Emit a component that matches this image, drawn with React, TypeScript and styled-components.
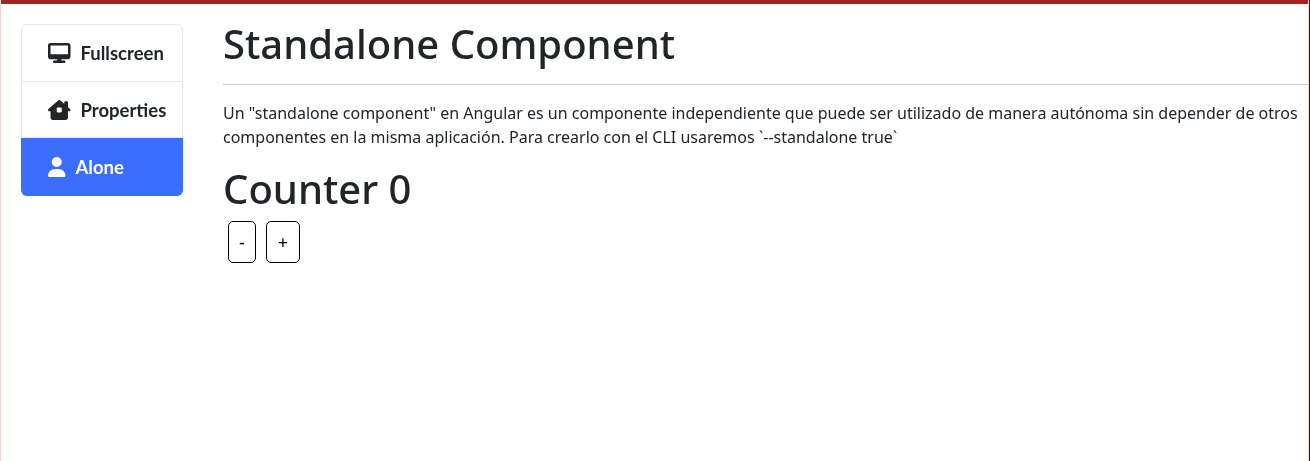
import React from "react";
import styled, { createGlobalStyle } from "styled-components";
import { FaDesktop, FaHouseChimneyWindow, FaUser } from "react-icons/fa6";

const Global = createGlobalStyle`
  html, body { margin: 0; padding: 0; background: #fff; }
  body { font-family: "Noto Sans", sans-serif; color: #212529; }
  * { box-sizing: border-box; }
`;

const Window = styled.div`
  width: 1310px;
  height: 461px;
  overflow: hidden;
  display: flex;
  will-change: transform;
`;

const Frame = styled.div`
  flex: 1;
  min-width: 0;
  display: flex;
  flex-direction: column;
  border-left: 1px solid #f5d5d2;
  border-right: 1px solid #f5d5d2;
`;

const EdgeStrip = styled.div`
  width: 1px;
  flex: none;
  background: #2a2020;
`;

const TopBar = styled.div`
  height: 4px;
  flex: none;
  background: #a52222;
`;

const Layout = styled.div`
  display: flex;
  align-items: flex-start;
  padding: 20px 0 0 20px;
`;

const Nav = styled.nav`
  width: 162px;
  flex: none;
  display: flex;
  flex-direction: column;
  font-family: "Lato", sans-serif;
  font-weight: 700;
  font-size: 18.5px;
  margin-right: 40px;
`;

const NavItem = styled.div<{ $height: number }>`
  height: ${(p) => p.$height}px;
  display: flex;
  align-items: center;
  gap: 10px;
  padding-left: 26px;
  background: #fff;
  color: #212529;
  border: solid #e3e6ea;
  border-width: 0 1px 1px;
  &:first-child {
    border-top-width: 1px;
    border-radius: 6px 6px 0 0;
  }
`;

const ActiveItem = styled(NavItem)`
  background: #3b6dff;
  color: #fff;
  border-color: #3b6dff;
  border-radius: 0 0 6px 6px;
`;

const DesktopIcon = styled(FaDesktop)`
  flex: none;
  width: 22.5px;
  height: 20px;
`;

const HouseIcon = styled(FaHouseChimneyWindow)`
  flex: none;
  width: 22.5px;
  height: 20px;
`;

const UserIcon = styled(FaUser)`
  flex: none;
  width: 17.5px;
  height: 20px;
`;

const Main = styled.main`
  flex: 1;
  min-width: 0;
`;

const Title = styled.h1`
  margin: 0;
  font-size: 40px;
  font-weight: 500;
  line-height: 40px;
  padding-bottom: 20px;
  border-bottom: 1px solid #ccc;
`;

const Paragraph = styled.p`
  margin: 16px 0 0;
  font-size: 16px;
  line-height: 24px;
  width: 1080px;
`;

const Counter = styled.h2`
  margin: 16px 0 0;
  font-size: 40px;
  font-weight: 500;
  line-height: 48px;
`;

const Buttons = styled.div`
  display: flex;
  gap: 10px;
  margin: 8px 0 0 5px;
`;

const Button = styled.button<{ $width: number }>`
  width: ${(p) => p.$width}px;
  height: 42px;
  padding: 0;
  background: #fff;
  border: 1px solid #000;
  border-radius: 5px;
  font-family: "Noto Sans", sans-serif;
  font-size: 18px;
  color: #000;
`;

export default function App() {
  return (
    <>
      <Global />
      <Window>
        <Frame>
          <TopBar />
          <Layout>
            <Nav>
              <NavItem $height={58}>
                <DesktopIcon />
                Fullscreen
              </NavItem>
              <NavItem $height={56}>
                <HouseIcon />
                Properties
              </NavItem>
              <ActiveItem $height={58}>
                <UserIcon />
                Alone
              </ActiveItem>
            </Nav>
            <Main>
              <Title>Standalone Component</Title>
              <Paragraph>
                Un "standalone component" en Angular es un componente independiente que puede ser utilizado de manera autónoma sin depender de otros componentes en la misma aplicación. Para crearlo con el CLI usaremos `--standalone true`
              </Paragraph>
              <Counter>Counter 0</Counter>
              <Buttons>
                <Button $width={28}>-</Button>
                <Button $width={34}>+</Button>
              </Buttons>
            </Main>
          </Layout>
        </Frame>
        <EdgeStrip />
      </Window>
    </>
  );
}
